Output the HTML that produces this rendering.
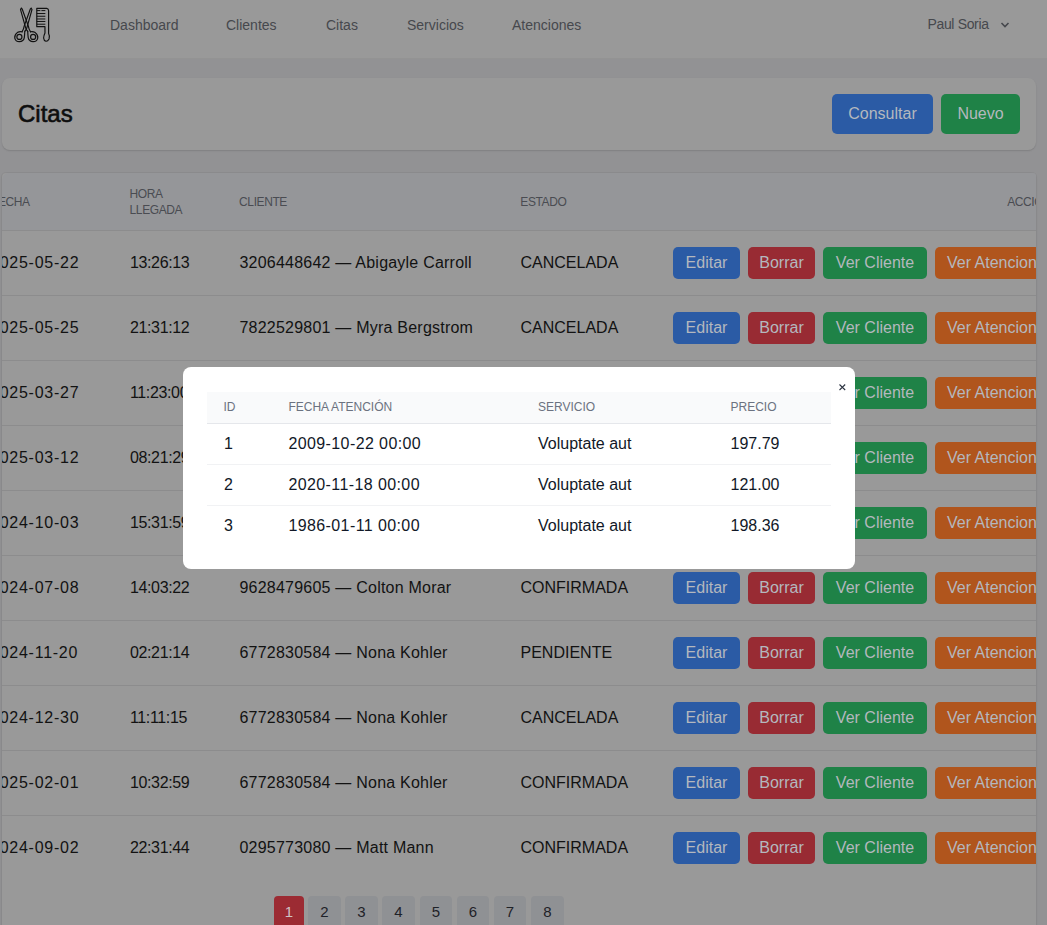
<!DOCTYPE html>
<html><head><meta charset="utf-8">
<style>
*{box-sizing:border-box;margin:0;padding:0}
html,body{width:1047px;height:925px;overflow:hidden}
body{position:relative;background:#929294;font-family:"Liberation Sans",sans-serif;color:#111}
.a{position:absolute;white-space:nowrap}
.nav{position:absolute;left:0;top:0;width:1047px;height:59px;background:#999999;border-bottom:1px solid #939393}
.nl{position:absolute;top:18px;font-size:14px;line-height:14px;color:#46484d}
.card{position:absolute;background:#999999;border-radius:8px;box-shadow:0 1px 2px rgba(0,0,0,0.08),0 1px 1px rgba(0,0,0,0.05)}
.btn{position:absolute;border-radius:5px;color:#b4b8be;font-size:16px;line-height:16px;text-align:center}
.th{position:absolute;font-size:12px;line-height:15.6px;letter-spacing:-0.4px;color:#4a4c52;text-transform:uppercase}
.td{position:absolute;font-size:16px;line-height:16px;color:#121212}
.rowb{position:absolute;left:2px;width:1034px;height:1px;background:#8c8c8d}
.b1{background:#2b5ba5}
.b2{background:#982b33}
.b3{background:#1f8247}
.b4{background:#b0551d}
.modal{position:absolute;left:183px;top:367px;width:672px;height:202px;background:#fff;border-radius:8px}
.mth{position:absolute;font-size:12px;line-height:12px;color:#6b7280}
.mtd{position:absolute;font-size:16px;line-height:16px;color:#111827}
.pg{position:absolute;top:896px;height:40px;border-radius:4px;background:#8f9194;font-size:15px;line-height:15px;color:#1f2228;text-align:center}
</style></head><body>

<div class="nav">
  <svg class="a" style="left:10px;top:4px" width="46" height="42" viewBox="0 0 1013 925">
    <g fill="none" stroke="#111" stroke-width="26" stroke-linejoin="round" stroke-linecap="round">
      <!-- comb -->
      <path d="M590 95 H810 Q850 100 850 150 V650 Q880 700 860 770 Q830 825 790 820 Q745 810 740 750 Q745 690 770 640 V500 H590 Z"/>
      <path d="M600 145 H660 M700 145 H770 M600 210 H770 M600 270 H770 M600 330 H770 M600 385 H770 M600 445 H770" stroke-width="22"/>
      <!-- scissors blades -->
      <path d="M250 92 L232 122 L342 515 Q352 565 390 600 M250 92 L270 115 L402 482 Q416 565 452 612"/>
      <path d="M466 92 L484 122 L374 515 Q364 565 326 600 M466 92 L446 115 L314 482 Q300 565 264 612"/>
      <path d="M264 612 Q210 600 160 630 Q95 680 105 750 Q125 830 205 830 Q300 825 315 740 Q322 680 326 600"/>
      <path d="M452 612 Q506 600 556 630 Q621 680 611 750 Q591 830 511 830 Q416 825 401 740 Q394 680 390 600"/>
      <circle cx="207" cy="725" r="56"/>
      <circle cx="509" cy="725" r="56"/>
    </g>
  </svg>
  <div class="nl a" style="left:110px">Dashboard</div>
  <div class="nl a" style="left:226px">Clientes</div>
  <div class="nl a" style="left:326px">Citas</div>
  <div class="nl a" style="left:407px">Servicios</div>
  <div class="nl a" style="left:512px">Atenciones</div>
  <div class="nl a" style="left:927.5px;top:17px;letter-spacing:-0.35px">Paul Soria</div>
  <svg class="a" style="left:999px;top:20px" width="12" height="10" viewBox="0 0 12 10"><path d="M2.5 3 L6 6.5 L9.5 3" fill="none" stroke="#46484d" stroke-width="1.6"/></svg>
</div>

<!-- header card -->
<div class="card" style="left:2px;top:78px;width:1034px;height:72px"></div>
<div class="a" style="left:18px;top:101.5px;font-size:24px;line-height:24px;-webkit-text-stroke:0.6px #0e0e0e;color:#0e0e0e">Citas</div>
<div class="btn b1" style="left:832px;top:94px;width:101px;height:40px;padding-top:12px">Consultar</div>
<div class="btn b3" style="left:941px;top:94px;width:79px;height:40px;padding-top:12px">Nuevo</div>

<!-- table card -->
<div class="card" style="left:2px;top:173px;width:1034px;height:800px;border-radius:4px;box-shadow:0 0 0 1px rgba(0,0,0,0.035),0 1px 3px rgba(0,0,0,0.06)"></div>
<div id="tbl" class="a" style="left:2px;top:173px;width:1034px;height:752px;overflow:hidden;border-top-left-radius:7px;border-top-right-radius:3px">
<div class="a" style="left:0;top:0;width:1034px;height:57px;background:#959699"></div>
<div class="th a" style="left:-11.0px;top:23.0px;line-height:12px">FECHA</div>
<div class="th a" style="left:127.6px;top:14.0px">HORA<br>LLEGADA</div>
<div class="th a" style="left:237.1px;top:23.0px;line-height:12px">CLIENTE</div>
<div class="th a" style="left:518.3px;top:23.0px;line-height:12px">ESTADO</div>
<div class="th a" style="left:1005.2px;top:23.0px;line-height:12px">ACCIONES</div>
<div class="rowb" style="left:0;top:57px;width:1034px"></div>
<div class="td a" style="left:-12.0px;top:82.0px;letter-spacing:0.75px">2025-05-22</div>
<div class="td a" style="left:127.9px;top:82.0px;letter-spacing:-0.35px">13:26:13</div>
<div class="td a" style="left:237.5px;top:82.0px;letter-spacing:0.22px">3206448642 — Abigayle Carroll</div>
<div class="td a" style="left:518.5px;top:82.0px">CANCELADA</div>
<div class="btn b1" style="left:671.0px;top:74.0px;width:67px;height:32px;padding-top:8px">Editar</div>
<div class="btn b2" style="left:746.0px;top:74.0px;width:67px;height:32px;padding-top:8px">Borrar</div>
<div class="btn b3" style="left:821.0px;top:74.0px;width:104px;height:32px;padding-top:8px">Ver Cliente</div>
<div class="btn b4" style="left:933.0px;top:74.0px;width:128px;height:32px;padding-top:8px;text-align:left;padding-left:12px">Ver Atenciones</div>
<div class="rowb" style="left:0;top:122px;width:1034px"></div>
<div class="td a" style="left:-12.0px;top:147.0px;letter-spacing:0.75px">2025-05-25</div>
<div class="td a" style="left:127.9px;top:147.0px;letter-spacing:-0.35px">21:31:12</div>
<div class="td a" style="left:237.5px;top:147.0px;letter-spacing:0.22px">7822529801 — Myra Bergstrom</div>
<div class="td a" style="left:518.5px;top:147.0px">CANCELADA</div>
<div class="btn b1" style="left:671.0px;top:139.0px;width:67px;height:32px;padding-top:8px">Editar</div>
<div class="btn b2" style="left:746.0px;top:139.0px;width:67px;height:32px;padding-top:8px">Borrar</div>
<div class="btn b3" style="left:821.0px;top:139.0px;width:104px;height:32px;padding-top:8px">Ver Cliente</div>
<div class="btn b4" style="left:933.0px;top:139.0px;width:128px;height:32px;padding-top:8px;text-align:left;padding-left:12px">Ver Atenciones</div>
<div class="rowb" style="left:0;top:187px;width:1034px"></div>
<div class="td a" style="left:-12.0px;top:212.0px;letter-spacing:0.75px">2025-03-27</div>
<div class="td a" style="left:127.9px;top:212.0px;letter-spacing:-0.35px">11:23:00</div>
<div class="td a" style="left:237.5px;top:212.0px;letter-spacing:0.22px">5123908817 — Jaylen Hudson</div>
<div class="td a" style="left:518.5px;top:212.0px">PENDIENTE</div>
<div class="btn b1" style="left:671.0px;top:204.0px;width:67px;height:32px;padding-top:8px">Editar</div>
<div class="btn b2" style="left:746.0px;top:204.0px;width:67px;height:32px;padding-top:8px">Borrar</div>
<div class="btn b3" style="left:821.0px;top:204.0px;width:104px;height:32px;padding-top:8px">Ver Cliente</div>
<div class="btn b4" style="left:933.0px;top:204.0px;width:128px;height:32px;padding-top:8px;text-align:left;padding-left:12px">Ver Atenciones</div>
<div class="rowb" style="left:0;top:252px;width:1034px"></div>
<div class="td a" style="left:-12.0px;top:277.0px;letter-spacing:0.75px">2025-03-12</div>
<div class="td a" style="left:127.9px;top:277.0px;letter-spacing:-0.35px">08:21:29</div>
<div class="td a" style="left:237.5px;top:277.0px;letter-spacing:0.22px">2039481726 — Loma Gislason</div>
<div class="td a" style="left:518.5px;top:277.0px">CONFIRMADA</div>
<div class="btn b1" style="left:671.0px;top:269.0px;width:67px;height:32px;padding-top:8px">Editar</div>
<div class="btn b2" style="left:746.0px;top:269.0px;width:67px;height:32px;padding-top:8px">Borrar</div>
<div class="btn b3" style="left:821.0px;top:269.0px;width:104px;height:32px;padding-top:8px">Ver Cliente</div>
<div class="btn b4" style="left:933.0px;top:269.0px;width:128px;height:32px;padding-top:8px;text-align:left;padding-left:12px">Ver Atenciones</div>
<div class="rowb" style="left:0;top:317px;width:1034px"></div>
<div class="td a" style="left:-12.0px;top:342.0px;letter-spacing:0.75px">2024-10-03</div>
<div class="td a" style="left:127.9px;top:342.0px;letter-spacing:-0.35px">15:31:59</div>
<div class="td a" style="left:237.5px;top:342.0px;letter-spacing:0.22px">8192038475 — Ewald Weber</div>
<div class="td a" style="left:518.5px;top:342.0px">CANCELADA</div>
<div class="btn b1" style="left:671.0px;top:334.0px;width:67px;height:32px;padding-top:8px">Editar</div>
<div class="btn b2" style="left:746.0px;top:334.0px;width:67px;height:32px;padding-top:8px">Borrar</div>
<div class="btn b3" style="left:821.0px;top:334.0px;width:104px;height:32px;padding-top:8px">Ver Cliente</div>
<div class="btn b4" style="left:933.0px;top:334.0px;width:128px;height:32px;padding-top:8px;text-align:left;padding-left:12px">Ver Atenciones</div>
<div class="rowb" style="left:0;top:382px;width:1034px"></div>
<div class="td a" style="left:-12.0px;top:407.0px;letter-spacing:0.75px">2024-07-08</div>
<div class="td a" style="left:127.9px;top:407.0px;letter-spacing:-0.35px">14:03:22</div>
<div class="td a" style="left:237.5px;top:407.0px;letter-spacing:0.22px">9628479605 — Colton Morar</div>
<div class="td a" style="left:518.5px;top:407.0px">CONFIRMADA</div>
<div class="btn b1" style="left:671.0px;top:399.0px;width:67px;height:32px;padding-top:8px">Editar</div>
<div class="btn b2" style="left:746.0px;top:399.0px;width:67px;height:32px;padding-top:8px">Borrar</div>
<div class="btn b3" style="left:821.0px;top:399.0px;width:104px;height:32px;padding-top:8px">Ver Cliente</div>
<div class="btn b4" style="left:933.0px;top:399.0px;width:128px;height:32px;padding-top:8px;text-align:left;padding-left:12px">Ver Atenciones</div>
<div class="rowb" style="left:0;top:447px;width:1034px"></div>
<div class="td a" style="left:-12.0px;top:472.0px;letter-spacing:0.75px">2024-11-20</div>
<div class="td a" style="left:127.9px;top:472.0px;letter-spacing:-0.35px">02:21:14</div>
<div class="td a" style="left:237.5px;top:472.0px;letter-spacing:0.22px">6772830584 — Nona Kohler</div>
<div class="td a" style="left:518.5px;top:472.0px">PENDIENTE</div>
<div class="btn b1" style="left:671.0px;top:464.0px;width:67px;height:32px;padding-top:8px">Editar</div>
<div class="btn b2" style="left:746.0px;top:464.0px;width:67px;height:32px;padding-top:8px">Borrar</div>
<div class="btn b3" style="left:821.0px;top:464.0px;width:104px;height:32px;padding-top:8px">Ver Cliente</div>
<div class="btn b4" style="left:933.0px;top:464.0px;width:128px;height:32px;padding-top:8px;text-align:left;padding-left:12px">Ver Atenciones</div>
<div class="rowb" style="left:0;top:512px;width:1034px"></div>
<div class="td a" style="left:-12.0px;top:537.0px;letter-spacing:0.75px">2024-12-30</div>
<div class="td a" style="left:127.9px;top:537.0px;letter-spacing:-0.35px">11:11:15</div>
<div class="td a" style="left:237.5px;top:537.0px;letter-spacing:0.22px">6772830584 — Nona Kohler</div>
<div class="td a" style="left:518.5px;top:537.0px">CANCELADA</div>
<div class="btn b1" style="left:671.0px;top:529.0px;width:67px;height:32px;padding-top:8px">Editar</div>
<div class="btn b2" style="left:746.0px;top:529.0px;width:67px;height:32px;padding-top:8px">Borrar</div>
<div class="btn b3" style="left:821.0px;top:529.0px;width:104px;height:32px;padding-top:8px">Ver Cliente</div>
<div class="btn b4" style="left:933.0px;top:529.0px;width:128px;height:32px;padding-top:8px;text-align:left;padding-left:12px">Ver Atenciones</div>
<div class="rowb" style="left:0;top:577px;width:1034px"></div>
<div class="td a" style="left:-12.0px;top:602.0px;letter-spacing:0.75px">2025-02-01</div>
<div class="td a" style="left:127.9px;top:602.0px;letter-spacing:-0.35px">10:32:59</div>
<div class="td a" style="left:237.5px;top:602.0px;letter-spacing:0.22px">6772830584 — Nona Kohler</div>
<div class="td a" style="left:518.5px;top:602.0px">CONFIRMADA</div>
<div class="btn b1" style="left:671.0px;top:594.0px;width:67px;height:32px;padding-top:8px">Editar</div>
<div class="btn b2" style="left:746.0px;top:594.0px;width:67px;height:32px;padding-top:8px">Borrar</div>
<div class="btn b3" style="left:821.0px;top:594.0px;width:104px;height:32px;padding-top:8px">Ver Cliente</div>
<div class="btn b4" style="left:933.0px;top:594.0px;width:128px;height:32px;padding-top:8px;text-align:left;padding-left:12px">Ver Atenciones</div>
<div class="rowb" style="left:0;top:642px;width:1034px"></div>
<div class="td a" style="left:-12.0px;top:667.0px;letter-spacing:0.75px">2024-09-02</div>
<div class="td a" style="left:127.9px;top:667.0px;letter-spacing:-0.35px">22:31:44</div>
<div class="td a" style="left:237.5px;top:667.0px;letter-spacing:0.22px">0295773080 — Matt Mann</div>
<div class="td a" style="left:518.5px;top:667.0px">CONFIRMADA</div>
<div class="btn b1" style="left:671.0px;top:659.0px;width:67px;height:32px;padding-top:8px">Editar</div>
<div class="btn b2" style="left:746.0px;top:659.0px;width:67px;height:32px;padding-top:8px">Borrar</div>
<div class="btn b3" style="left:821.0px;top:659.0px;width:104px;height:32px;padding-top:8px">Ver Cliente</div>
<div class="btn b4" style="left:933.0px;top:659.0px;width:128px;height:32px;padding-top:8px;text-align:left;padding-left:12px">Ver Atenciones</div>
<div class="pg" style="left:272.0px;top:723.0px;width:30px;padding-top:7.5px;background:#9c2b33;color:#cfc3c5">1</div>
<div class="pg" style="left:306.0px;top:723.0px;width:33px;padding-top:7.5px;">2</div>
<div class="pg" style="left:343.0px;top:723.0px;width:33px;padding-top:7.5px;">3</div>
<div class="pg" style="left:380.0px;top:723.0px;width:33px;padding-top:7.5px;">4</div>
<div class="pg" style="left:418.0px;top:723.0px;width:32px;padding-top:7.5px;">5</div>
<div class="pg" style="left:455.0px;top:723.0px;width:32px;padding-top:7.5px;">6</div>
<div class="pg" style="left:492.0px;top:723.0px;width:32px;padding-top:7.5px;">7</div>
<div class="pg" style="left:529.0px;top:723.0px;width:33px;padding-top:7.5px;">8</div>
</div>
<div class="modal">
<div class="a" style="left:24.0px;top:24.5px;width:624px;height:32px;background:#f9fafb;border-bottom:1px solid #e5e7eb"></div>
<div class="mth a" style="left:40.4px;top:34.0px">ID</div>
<div class="mth a" style="left:105.4px;top:34.0px">FECHA ATENCIÓN</div>
<div class="mth a" style="left:355.0px;top:34.0px">SERVICIO</div>
<div class="mth a" style="left:547.5px;top:34.0px">PRECIO</div>
<div class="mtd a" style="left:40.9px;top:69.2px">1</div>
<div class="mtd a" style="left:105.4px;top:69.2px;letter-spacing:0.4px">2009-10-22 00:00</div>
<div class="mtd a" style="left:355.0px;top:69.2px">Voluptate aut</div>
<div class="mtd a" style="left:547.5px;top:69.2px">197.79</div>
<div class="a" style="left:24.0px;top:97.0px;width:624px;height:1px;background:#f1f2f4"></div>
<div class="mtd a" style="left:40.9px;top:110.2px">2</div>
<div class="mtd a" style="left:105.4px;top:110.2px;letter-spacing:0.4px">2020-11-18 00:00</div>
<div class="mtd a" style="left:355.0px;top:110.2px">Voluptate aut</div>
<div class="mtd a" style="left:547.5px;top:110.2px">121.00</div>
<div class="a" style="left:24.0px;top:138.0px;width:624px;height:1px;background:#f1f2f4"></div>
<div class="mtd a" style="left:40.9px;top:151.2px">3</div>
<div class="mtd a" style="left:105.4px;top:151.2px;letter-spacing:0.4px">1986-01-11 00:00</div>
<div class="mtd a" style="left:355.0px;top:151.2px">Voluptate aut</div>
<div class="mtd a" style="left:547.5px;top:151.2px">198.36</div>
<svg class="a" style="left:655.0px;top:16.0px" width="9" height="9" viewBox="0 0 9 9"><path d="M1.5 1.5 L7.2 7 M7.2 1.5 L1.5 7" stroke="#2b3340" stroke-width="1.05"/></svg>
</div>
</body></html>
